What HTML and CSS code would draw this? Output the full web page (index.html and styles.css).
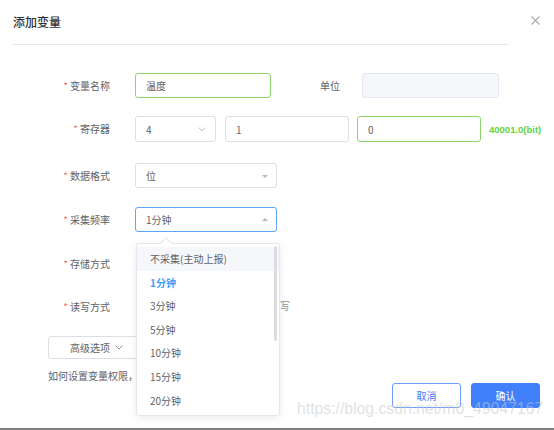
FILE: index.html
```html
<!DOCTYPE html>
<html lang="zh">
<head>
<meta charset="utf-8">
<title>添加变量</title>
<link rel="stylesheet" href="styles.css">
</head>
<body>
<div class="dialog">
  <header class="hd">
    <span class="title">添加变量</span>
    <svg class="close" width="9" height="9" viewBox="0 0 9 9"><path d="M0.5 0.5L8.5 8.5M8.5 0.5L0.5 8.5" stroke="#a8abb2" stroke-width="1.1"/></svg>
  </header>
  <div class="form">
    <div class="row r1">
      <label class="lbl"><i>*</i>变量名称</label>
      <div class="ctl w136 green">温度</div>
      <label class="lbl2">单位</label>
      <div class="ctl w137 disabled"></div>
    </div>
    <div class="row r2">
      <label class="lbl"><i>*</i>寄存器</label>
      <div class="ctl w81 sel">4
        <svg class="chev" width="8" height="5" viewBox="0 0 8 5"><path d="M0.5 0.5L4 4L7.5 0.5" fill="none" stroke="#c0c4cc" stroke-width="1"/></svg>
      </div>
      <div class="ctl w124 m9">1</div>
      <div class="ctl w124 m8 green">0</div>
      <span class="addr">40001.0(bit)</span>
    </div>
    <div class="row r3">
      <label class="lbl"><i>*</i>数据格式</label>
      <div class="ctl w142 sel">位<span class="caret down"></span></div>
    </div>
    <div class="row r4">
      <label class="lbl"><i>*</i>采集频率</label>
      <div class="ctl w142 sel focus">1分钟<span class="caret up"></span></div>
    </div>
    <div class="row r5">
      <label class="lbl"><i>*</i>存储方式</label>
    </div>
    <div class="row r6">
      <label class="lbl"><i>*</i>读写方式</label>
      <span class="rw">读写</span>
    </div>
  </div>
  <div class="adv">高级选项
    <svg width="8" height="5" viewBox="0 0 8 5"><path d="M0.5 0.5L4 4L7.5 0.5" fill="none" stroke="#909399" stroke-width="1"/></svg>
  </div>
  <p class="tip">如何设置变量权限，请参考帮助文档</p>
  <div class="footer">
    <button class="btn cancel">取消</button>
    <button class="btn ok">确认</button>
  </div>

  <div class="dropdown">
    <span class="arrow"></span>
    <ul class="list">
      <li class="hover">不采集(主动上报)</li>
      <li class="selected">1分钟</li>
      <li>3分钟</li>
      <li>5分钟</li>
      <li>10分钟</li>
      <li>15分钟</li>
      <li>20分钟</li>
    </ul>
    <span class="thumb"></span>
  </div>
  <div class="watermark">https://blog.csdn.net/m0_49047167</div>
  <div class="edge"></div>
</div>
</body>
</html>
```

FILE: styles.css
```css
html, body {
  margin: 0;
  padding: 0;
  background: #fff;
}
body {
  width: 554px;
  height: 430px;
  overflow: hidden;
  font-family: "Noto Sans CJK SC", "Liberation Sans", sans-serif;
  font-size: 10px;
  color: #606266;
}
.dialog {
  position: relative;
  width: 554px;
  height: 430px;
  display: flex;
  flex-direction: column;
}
.hd {
  height: 44px;
  margin: 0 45px 0 13px;
  border-bottom: 1px solid #e4e7ed;
  display: flex;
  align-items: center;
  position: relative;
}
.title {
  font-size: 12px;
  font-weight: 500;
  color: #303133;
  line-height: 14px;
}
.close {
  position: absolute;
  right: -31px;
  top: 16px;
}
.form {
  padding-left: 48px;
  display: flex;
  flex-direction: column;
}
.row {
  display: flex;
  align-items: center;
  height: 25px;
}
.r1 { margin-top: 28px; }
.r2 { margin-top: 18px; height: 26px; }
.r3 { margin-top: 21px; }
.r4 { margin-top: 19px; }
.r5 { margin-top: 19px; }
.r6 { margin-top: 18px; position: relative; }
.lbl {
  width: 62px;
  margin-right: 25px;
  text-align: right;
  line-height: 14px;
  color: #606266;
}
.lbl i {
  font-style: normal;
  color: #f56c6c;
  margin-right: 2px;
}
.lbl2 {
  width: 69px;
  margin-right: 22px;
  text-align: right;
  line-height: 14px;
}
.ctl {
  box-sizing: border-box;
  height: 100%;
  border: 1px solid #dcdfe6;
  border-radius: 3px;
  padding-left: 10px;
  display: flex;
  align-items: center;
  position: relative;
  color: #606266;
  background: #fff;
}
.w136 { width: 136px; }
.w137 { width: 137px; }
.w81 { width: 81px; }
.w124 { width: 124px; }
.w142 { width: 142px; }
.m9 { margin-left: 9px; }
.m8 { margin-left: 8px; }
.green { border-color: #8fd46c; }
.focus { border-color: #5aa5f5; }
.disabled {
  background: #f5f7fa;
  border-color: #e4e7ed;
}
.chev {
  position: absolute;
  right: 9px;
  top: 10px;
}
.caret {
  position: absolute;
  right: 8px;
  width: 0;
  height: 0;
  border-left: 3px solid transparent;
  border-right: 3px solid transparent;
}
.caret.down {
  top: 11px;
  border-top: 3px solid #b4b7bd;
}
.caret.up {
  top: 10px;
  border-bottom: 3px solid #b4b7bd;
}
.addr {
  margin-left: 8px;
  font-family: "Liberation Sans", sans-serif;
  font-weight: bold;
  font-size: 9.5px;
  color: #5fd33f;
}
.rw {
  position: absolute;
  left: 222px;
  top: 5px;
  line-height: 14px;
  color: #909399;
}
.adv {
  box-sizing: border-box;
  margin: 17px 0 0 48px;
  width: 100px;
  height: 23px;
  border: 1px solid #dcdfe6;
  border-radius: 3px;
  display: flex;
  align-items: center;
  padding-left: 21px;
  gap: 5px;
  color: #606266;
}
.tip {
  margin: 10px 0 0 48px;
  line-height: 14px;
  height: 14px;
  color: #606266;
}
.footer {
  display: flex;
  justify-content: flex-end;
  gap: 10px;
  padding-right: 14px;
}
.btn {
  box-sizing: border-box;
  width: 69px;
  height: 25px;
  border-radius: 3px;
  font-family: "Noto Sans CJK SC", sans-serif;
  font-size: 10px;
  padding: 0;
  cursor: pointer;
}
.cancel {
  background: #fff;
  border: 1px solid #6b9cff;
  color: #3f7cf7;
}
.ok {
  background: #4080fb;
  border: 1px solid #4080fb;
  color: #fff;
}
.dropdown {
  position: absolute;
  left: 136px;
  top: 243px;
  width: 144px;
  height: 173px;
  box-sizing: border-box;
  background: #fff;
  border: 1px solid #e4e7ed;
  border-radius: 3px;
  box-shadow: 0 2px 8px rgba(0, 0, 0, 0.08);
}
.arrow {
  position: absolute;
  left: 25px;
  top: -5px;
  width: 7px;
  height: 7px;
  background: #fff;
  border-left: 1px solid #e4e7ed;
  border-top: 1px solid #e4e7ed;
  transform: rotate(45deg);
}
.list {
  list-style: none;
  margin: 0;
  padding: 3px 0 0;
}
.list li {
  height: 23.6px;
  line-height: 23.6px;
  padding-left: 13px;
  color: #606266;
}
.list li.hover { background: #f5f7fa; }
.list li.selected {
  color: #409eff;
  font-weight: bold;
}
.thumb {
  position: absolute;
  right: 2px;
  top: 2px;
  width: 3px;
  height: 95px;
  border-radius: 2px;
  background: #dcdde0;
}
.watermark {
  position: absolute;
  left: 297px;
  top: 398px;
  font-family: "Liberation Sans", sans-serif;
  font-size: 15.75px;
  line-height: 22px;
  color: rgba(200, 200, 200, 0.55);
  white-space: nowrap;
}
.edge {
  position: absolute;
  left: 0;
  right: 0;
  bottom: 0;
  height: 2px;
  background: #808080;
}
```
